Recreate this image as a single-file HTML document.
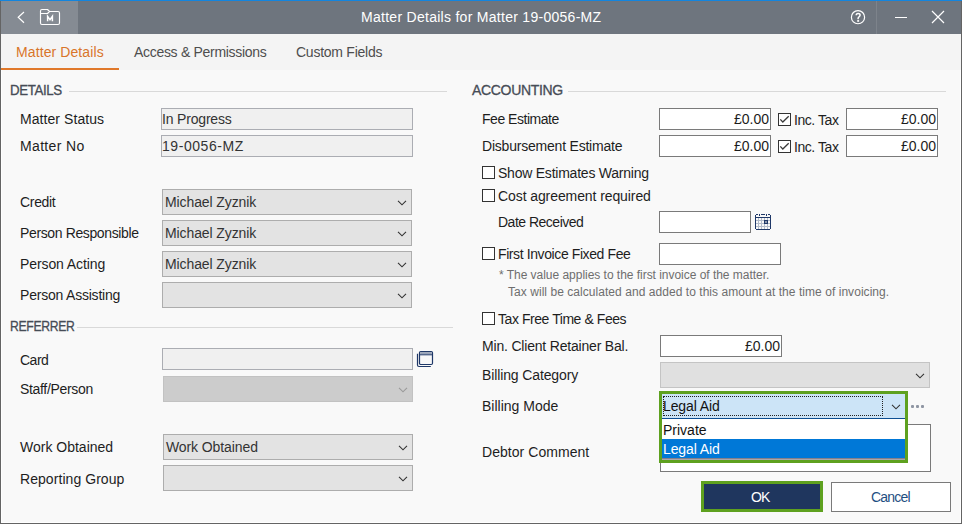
<!DOCTYPE html>
<html><head><meta charset="utf-8"><style>
html,body{margin:0;padding:0;}
body{width:962px;height:524px;position:relative;overflow:hidden;background:#f9f9f9;font-family:"Liberation Sans", sans-serif;}
.a{position:absolute;}
.t{white-space:nowrap;}
</style></head><body>
<div class="a" style="left:0px;top:0px;width:962px;height:1px;background:#1385de;"></div>
<div class="a" style="left:0px;top:1px;width:962px;height:33px;background:#6e757e;"></div>
<div class="a" style="left:1px;top:1px;width:77px;height:33px;background:#858b93;"></div>
<div class="a" style="left:876px;top:1px;width:1px;height:33px;background:#7d838b;"></div>
<svg class="a" style="left:15px;top:9px" width="12" height="16" viewBox="0 0 12 16"><path d="M9 3 L3.2 8.3 L9 13.7" fill="none" stroke="#fff" stroke-width="1.2"/></svg>
<svg class="a" style="left:36px;top:5px" width="28" height="24" viewBox="0 0 28 24"><path d="M4.5 6 Q4.5 4.5 6 4.5 H11.5 L13.5 6.5 H22 Q23.5 6.5 23.5 8 V18 Q23.5 19.5 22 19.5 H6 Q4.5 19.5 4.5 18 Z M4.5 8.5 H11.5 L13.5 6.5" fill="none" stroke="#fff" stroke-width="1.15" stroke-linejoin="round"/><path d="M11.6 16.2 V11.3 L14 14.6 L16.4 11.3 V16.2" fill="none" stroke="#fff" stroke-width="1.5" stroke-linejoin="miter"/></svg>
<div class="a t" style="top:9px;font-size:14px;line-height:16px;color:#ffffff;letter-spacing:0.28px;left:361px;">Matter Details for Matter 19-0056-MZ</div>
<svg class="a" style="left:849px;top:8px" width="18" height="18" viewBox="0 0 18 18"><circle cx="9" cy="9.15" r="6.6" fill="none" stroke="#fff" stroke-width="1.2"/><path d="M7.2 7.3 Q7.2 5.4 9.1 5.4 Q11.1 5.4 11.1 7.1 Q11.1 8.2 10 8.8 Q9.1 9.3 9.1 10.4 V11.3" fill="none" stroke="#fff" stroke-width="1.5"/><rect x="8.2" y="12.1" width="1.9" height="1.7" fill="#fff"/></svg>
<div class="a" style="left:895px;top:17px;width:12px;height:1px;background:#ffffff;"></div>
<svg class="a" style="left:930px;top:9px" width="16" height="16" viewBox="0 0 16 16"><path d="M2 2 L14 14 M14 2 L2 14" stroke="#fff" stroke-width="1.2"/></svg>
<div class="a" style="left:1px;top:34px;width:960px;height:36px;background:#f4f4f4;"></div>
<div class="a t" style="top:44px;font-size:14px;line-height:16px;color:#d9752a;letter-spacing:0.1px;left:16px;">Matter Details</div>
<div class="a t" style="top:44px;font-size:14px;line-height:16px;color:#4e4e4e;letter-spacing:-0.3px;left:134px;">Access &amp; Permissions</div>
<div class="a t" style="top:44px;font-size:14px;line-height:16px;color:#4e4e4e;letter-spacing:-0.25px;left:296px;">Custom Fields</div>
<div class="a" style="left:1px;top:68px;width:118px;height:2px;background:#e0782a;"></div>
<div class="a" style="left:0px;top:1px;width:1px;height:523px;background:#646464;"></div>
<div class="a" style="left:961px;top:1px;width:1px;height:523px;background:#646464;"></div>
<div class="a" style="left:0px;top:523px;width:962px;height:1px;background:#646464;"></div>
<div class="a" style="left:1px;top:522px;width:960px;height:1px;background:#ffffff;"></div>
<div class="a" style="left:1px;top:70px;width:1px;height:453px;background:#ffffff;"></div>
<div class="a" style="left:960px;top:70px;width:1px;height:453px;background:#ffffff;"></div>
<div class="a t" style="top:82px;font-size:14px;line-height:16px;color:#464c56;letter-spacing:-0.4px;left:10px;-webkit-text-stroke:0.3px #464c56;transform:scaleX(0.95);transform-origin:0 0;">DETAILS</div>
<div class="a" style="left:69px;top:91px;width:378px;height:1px;background:#d9d9d9;"></div>
<div class="a t" style="top:111px;font-size:14px;line-height:16px;color:#1e1e1e;letter-spacing:0.07px;left:20px;">Matter Status</div>
<div class="a" style="left:161px;top:108px;width:252px;height:22px;background:#f0f0f0;box-shadow:inset 0 0 0 1px #abadb3;"></div>
<div class="a t" style="top:111px;font-size:14px;line-height:16px;color:#333;letter-spacing:-0.18px;left:162px;">In Progress</div>
<div class="a t" style="top:138px;font-size:14px;line-height:16px;color:#1e1e1e;letter-spacing:0.34px;left:20px;">Matter No</div>
<div class="a" style="left:161px;top:135px;width:252px;height:22px;background:#f0f0f0;box-shadow:inset 0 0 0 1px #abadb3;"></div>
<div class="a t" style="top:138px;font-size:14px;line-height:16px;color:#333;letter-spacing:0.55px;left:162px;">19-0056-MZ</div>
<div class="a t" style="top:194px;font-size:14px;line-height:16px;color:#1e1e1e;letter-spacing:-0.32px;left:20px;">Credit</div>
<div class="a" style="left:162px;top:189px;width:250px;height:26px;background:#e3e3e3;box-shadow:inset 0 0 0 1px #adadad;"></div>
<div class="a t" style="top:194px;font-size:14px;line-height:16px;color:#333;letter-spacing:-0.1px;left:165px;">Michael Zyznik</div>
<svg class="a" style="left:397px;top:200px" width="10" height="6" viewBox="0 0 10 6"><path d="M1 0.8 L5 4.8 L9 0.8" fill="none" stroke="#333" stroke-width="1.1"/></svg>
<div class="a t" style="top:225px;font-size:14px;line-height:16px;color:#1e1e1e;letter-spacing:-0.37px;left:20px;">Person Responsible</div>
<div class="a" style="left:162px;top:220px;width:250px;height:26px;background:#e3e3e3;box-shadow:inset 0 0 0 1px #adadad;"></div>
<div class="a t" style="top:225px;font-size:14px;line-height:16px;color:#333;letter-spacing:-0.1px;left:165px;">Michael Zyznik</div>
<svg class="a" style="left:397px;top:231px" width="10" height="6" viewBox="0 0 10 6"><path d="M1 0.8 L5 4.8 L9 0.8" fill="none" stroke="#333" stroke-width="1.1"/></svg>
<div class="a t" style="top:256px;font-size:14px;line-height:16px;color:#1e1e1e;letter-spacing:-0.1px;left:20px;">Person Acting</div>
<div class="a" style="left:162px;top:251px;width:250px;height:26px;background:#e3e3e3;box-shadow:inset 0 0 0 1px #adadad;"></div>
<div class="a t" style="top:256px;font-size:14px;line-height:16px;color:#333;letter-spacing:-0.1px;left:165px;">Michael Zyznik</div>
<svg class="a" style="left:397px;top:262px" width="10" height="6" viewBox="0 0 10 6"><path d="M1 0.8 L5 4.8 L9 0.8" fill="none" stroke="#333" stroke-width="1.1"/></svg>
<div class="a t" style="top:287px;font-size:14px;line-height:16px;color:#1e1e1e;letter-spacing:-0.21px;left:20px;">Person Assisting</div>
<div class="a" style="left:162px;top:282px;width:250px;height:26px;background:#e3e3e3;box-shadow:inset 0 0 0 1px #adadad;"></div>
<svg class="a" style="left:397px;top:293px" width="10" height="6" viewBox="0 0 10 6"><path d="M1 0.8 L5 4.8 L9 0.8" fill="none" stroke="#333" stroke-width="1.1"/></svg>
<div class="a t" style="top:318px;font-size:14px;line-height:16px;color:#464c56;letter-spacing:-0.35px;left:10px;-webkit-text-stroke:0.3px #464c56;transform:scaleX(0.87);transform-origin:0 0;">REFERRER</div>
<div class="a" style="left:77px;top:327px;width:376px;height:1px;background:#d9d9d9;"></div>
<div class="a t" style="top:352px;font-size:14px;line-height:16px;color:#1e1e1e;letter-spacing:-0.5px;left:20px;">Card</div>
<div class="a" style="left:162px;top:348px;width:251px;height:22px;background:#f0f0f0;box-shadow:inset 0 0 0 1px #abadb3;"></div>
<svg class="a" style="left:416px;top:350px" width="18" height="18" viewBox="0 0 18 18"><rect x="3.5" y="1.5" width="13" height="13" rx="1.2" fill="#f7f7f8" stroke="#1f3868" stroke-width="1.2"/><rect x="4.1" y="2.1" width="11.8" height="2.2" fill="#96a1b6"/><line x1="3.5" y1="4.8" x2="16.5" y2="4.8" stroke="#1f3868" stroke-width="1"/><path d="M1.5 3.8 V15 Q1.5 16.5 3 16.5 H14.8" fill="none" stroke="#1f3868" stroke-width="1.2"/></svg>
<div class="a t" style="top:381px;font-size:14px;line-height:16px;color:#1e1e1e;letter-spacing:-0.32px;left:20px;">Staff/Person</div>
<div class="a" style="left:163px;top:376px;width:250px;height:26px;background:#cccccc;box-shadow:inset 0 0 0 1px #c2c2c2;"></div>
<svg class="a" style="left:398px;top:387px" width="10" height="6" viewBox="0 0 10 6"><path d="M1 0.8 L5 4.8 L9 0.8" fill="none" stroke="#9a9a9a" stroke-width="1.1"/></svg>
<div class="a t" style="top:439px;font-size:14px;line-height:16px;color:#1e1e1e;left:20px;">Work Obtained</div>
<div class="a" style="left:163px;top:434px;width:250px;height:26px;background:#e3e3e3;box-shadow:inset 0 0 0 1px #adadad;"></div>
<div class="a t" style="top:439px;font-size:14px;line-height:16px;color:#333;letter-spacing:-0.1px;left:166px;">Work Obtained</div>
<svg class="a" style="left:398px;top:445px" width="10" height="6" viewBox="0 0 10 6"><path d="M1 0.8 L5 4.8 L9 0.8" fill="none" stroke="#333" stroke-width="1.1"/></svg>
<div class="a t" style="top:471px;font-size:14px;line-height:16px;color:#1e1e1e;letter-spacing:0.06px;left:20px;">Reporting Group</div>
<div class="a" style="left:163px;top:465px;width:250px;height:26px;background:#e3e3e3;box-shadow:inset 0 0 0 1px #adadad;"></div>
<svg class="a" style="left:398px;top:476px" width="10" height="6" viewBox="0 0 10 6"><path d="M1 0.8 L5 4.8 L9 0.8" fill="none" stroke="#333" stroke-width="1.1"/></svg>
<div class="a t" style="top:82px;font-size:14px;line-height:16px;color:#464c56;letter-spacing:-0.32px;left:472px;-webkit-text-stroke:0.3px #464c56;">ACCOUNTING</div>
<div class="a" style="left:568px;top:91px;width:378px;height:1px;background:#d9d9d9;"></div>
<div class="a t" style="top:111px;font-size:14px;line-height:16px;color:#1e1e1e;letter-spacing:-0.48px;left:482px;">Fee Estimate</div>
<div class="a t" style="top:138px;font-size:14px;line-height:16px;color:#1e1e1e;letter-spacing:-0.21px;left:482px;">Disbursement Estimate</div>
<div class="a" style="left:659px;top:108px;width:112px;height:22px;background:#ffffff;box-shadow:inset 0 0 0 1px #7a7a7a;"></div>
<div class="a t" style="top:111px;font-size:14px;line-height:16px;color:#1c1c1c;right:193px;">£0.00</div>
<div class="a" style="left:659px;top:135px;width:112px;height:22px;background:#ffffff;box-shadow:inset 0 0 0 1px #7a7a7a;"></div>
<div class="a t" style="top:138px;font-size:14px;line-height:16px;color:#1c1c1c;right:193px;">£0.00</div>
<div class="a" style="left:846px;top:108px;width:92px;height:22px;background:#ffffff;box-shadow:inset 0 0 0 1px #7a7a7a;"></div>
<div class="a t" style="top:111px;font-size:14px;line-height:16px;color:#1c1c1c;right:26px;">£0.00</div>
<div class="a" style="left:846px;top:135px;width:92px;height:22px;background:#ffffff;box-shadow:inset 0 0 0 1px #7a7a7a;"></div>
<div class="a t" style="top:138px;font-size:14px;line-height:16px;color:#1c1c1c;right:26px;">£0.00</div>
<div class="a" style="left:778px;top:113px;width:13px;height:13px;background:#ffffff;box-shadow:inset 0 0 0 1px #333333;"></div>
<svg class="a" style="left:778px;top:113px" width="13" height="13" viewBox="0 0 13 13"><path d="M2.3 6.4 L4.8 9 L10.7 3.2" fill="none" stroke="#3a3a3a" stroke-width="1.3"/></svg>
<div class="a t" style="top:112px;font-size:14px;line-height:16px;color:#1e1e1e;letter-spacing:-0.44px;left:794px;">Inc. Tax</div>
<div class="a" style="left:778px;top:140px;width:13px;height:13px;background:#ffffff;box-shadow:inset 0 0 0 1px #333333;"></div>
<svg class="a" style="left:778px;top:140px" width="13" height="13" viewBox="0 0 13 13"><path d="M2.3 6.4 L4.8 9 L10.7 3.2" fill="none" stroke="#3a3a3a" stroke-width="1.3"/></svg>
<div class="a t" style="top:139px;font-size:14px;line-height:16px;color:#1e1e1e;letter-spacing:-0.44px;left:794px;">Inc. Tax</div>
<div class="a" style="left:482px;top:166px;width:13px;height:13px;background:#ffffff;box-shadow:inset 0 0 0 1px #333333;"></div>
<div class="a t" style="top:165px;font-size:14px;line-height:16px;color:#1e1e1e;letter-spacing:-0.23px;left:498px;">Show Estimates Warning</div>
<div class="a" style="left:482px;top:189px;width:13px;height:13px;background:#ffffff;box-shadow:inset 0 0 0 1px #333333;"></div>
<div class="a t" style="top:188px;font-size:14px;line-height:16px;color:#1e1e1e;letter-spacing:-0.09px;left:498px;">Cost agreement required</div>
<div class="a t" style="top:214px;font-size:14px;line-height:16px;color:#1e1e1e;letter-spacing:-0.5px;left:498px;">Date Received</div>
<div class="a" style="left:659px;top:211px;width:92px;height:22px;background:#ffffff;box-shadow:inset 0 0 0 1px #7a7a7a;"></div>
<svg class="a" style="left:755px;top:214px" width="16" height="16" viewBox="0 0 16 16" shape-rendering="crispEdges"><rect x="3" y="4" width="1" height="11" fill="#b3bccb"/><rect x="6" y="4" width="1" height="11" fill="#b3bccb"/><rect x="9" y="4" width="1" height="11" fill="#b3bccb"/><rect x="12" y="4" width="1" height="11" fill="#b3bccb"/><rect x="1" y="6" width="14" height="1" fill="#b3bccb"/><rect x="1" y="9" width="14" height="1" fill="#b3bccb"/><rect x="1" y="12" width="14" height="1" fill="#b3bccb"/><rect x="0" y="1" width="1" height="14" fill="#1f3868"/><rect x="15" y="1" width="1" height="14" fill="#1f3868"/><rect x="1" y="15" width="14" height="1" fill="#1f3868"/><rect x="1" y="0" width="2" height="1" fill="#1f3868"/><rect x="6" y="0" width="4" height="1" fill="#1f3868"/><rect x="13" y="0" width="2" height="1" fill="#1f3868"/><rect x="4" y="0" width="1" height="2" fill="#1f3868"/><rect x="11" y="0" width="1" height="2" fill="#1f3868"/><rect x="1" y="3" width="14" height="1" fill="#1f3868"/><rect x="9" y="6" width="4" height="4" fill="#1f3868"/><rect x="10" y="7" width="2" height="2" fill="#8d98ad"/></svg>
<div class="a" style="left:482px;top:247px;width:13px;height:13px;background:#ffffff;box-shadow:inset 0 0 0 1px #333333;"></div>
<div class="a t" style="top:246px;font-size:14px;line-height:16px;color:#1e1e1e;letter-spacing:-0.4px;left:498px;">First Invoice Fixed Fee</div>
<div class="a" style="left:659px;top:243px;width:122px;height:22px;background:#ffffff;box-shadow:inset 0 0 0 1px #7a7a7a;"></div>
<div class="a t" style="top:268px;font-size:12px;line-height:14px;color:#6e6e6e;letter-spacing:-0.03px;left:499px;">* The value applies to the first invoice of the matter.</div>
<div class="a t" style="top:285px;font-size:12px;line-height:14px;color:#6e6e6e;letter-spacing:0.05px;left:508px;">Tax will be calculated and added to this amount at the time of invoicing.</div>
<div class="a" style="left:482px;top:312px;width:13px;height:13px;background:#ffffff;box-shadow:inset 0 0 0 1px #333333;"></div>
<div class="a t" style="top:311px;font-size:14px;line-height:16px;color:#1e1e1e;letter-spacing:-0.44px;left:498px;">Tax Free Time &amp; Fees</div>
<div class="a t" style="top:338px;font-size:14px;line-height:16px;color:#1e1e1e;letter-spacing:-0.19px;left:482px;">Min. Client Retainer Bal.</div>
<div class="a" style="left:660px;top:335px;width:122px;height:22px;background:#ffffff;box-shadow:inset 0 0 0 1px #7a7a7a;"></div>
<div class="a t" style="top:338px;font-size:14px;line-height:16px;color:#1c1c1c;right:182px;">£0.00</div>
<div class="a t" style="top:367px;font-size:14px;line-height:16px;color:#1e1e1e;letter-spacing:-0.12px;left:482px;">Billing Category</div>
<div class="a" style="left:660px;top:362px;width:270px;height:26px;background:#e0e0e0;box-shadow:inset 0 0 0 1px #c4c4c4;"></div>
<svg class="a" style="left:915px;top:373px" width="10" height="6" viewBox="0 0 10 6"><path d="M1 0.8 L5 4.8 L9 0.8" fill="none" stroke="#333" stroke-width="1.1"/></svg>
<div class="a t" style="top:398px;font-size:14px;line-height:16px;color:#1e1e1e;left:482px;">Billing Mode</div>
<div class="a t" style="top:444px;font-size:14px;line-height:16px;color:#1e1e1e;letter-spacing:0.05px;left:482px;">Debtor Comment</div>
<div class="a" style="left:660px;top:424px;width:271px;height:48px;background:#ffffff;box-shadow:inset 0 0 0 1px #7a7a7a;"></div>
<div class="a" style="left:659px;top:391px;width:249px;height:72px;background:#5ea11f;"></div>
<div class="a" style="left:662px;top:394px;width:243px;height:24px;background:#cce4f7;"></div>
<div class="a" style="left:663px;top:396px;width:220px;height:20px;box-sizing:border-box;border:1px dotted #222"></div>
<div class="a t" style="top:398px;font-size:14px;line-height:16px;color:#111;letter-spacing:-0.1px;left:663px;">Legal Aid</div>
<svg class="a" style="left:891px;top:404px" width="10" height="6" viewBox="0 0 10 6"><path d="M1 0.8 L5 4.8 L9 0.8" fill="none" stroke="#333" stroke-width="1.1"/></svg>
<div class="a" style="left:662px;top:418px;width:243px;height:1px;background:#0d4f92;"></div>
<div class="a" style="left:662px;top:419px;width:243px;height:20px;background:#ffffff;"></div>
<div class="a t" style="top:422px;font-size:14px;line-height:16px;color:#111;left:663px;">Private</div>
<div class="a" style="left:662px;top:439px;width:243px;height:19px;background:#0078d7;"></div>
<div class="a t" style="top:441px;font-size:14px;line-height:16px;color:#ffffff;letter-spacing:-0.1px;left:663px;">Legal Aid</div>
<div class="a" style="left:662px;top:458px;width:243px;height:1px;background:#85808a;"></div>
<div class="a" style="left:662px;top:459px;width:243px;height:1px;background:#aaa6ac;"></div>
<div class="a" style="left:911px;top:405px;width:3px;height:3px;background:#8f96a3;border-radius:1px;"></div>
<div class="a" style="left:916px;top:405px;width:3px;height:3px;background:#8f96a3;border-radius:1px;"></div>
<div class="a" style="left:921px;top:405px;width:3px;height:3px;background:#8f96a3;border-radius:1px;"></div>
<div class="a" style="left:701px;top:481px;width:122px;height:31px;background:#5ea11f;"></div>
<div class="a" style="left:704px;top:484px;width:116px;height:25px;background:#1f365e;"></div>
<div class="a t" style="top:489px;font-size:14px;line-height:16px;color:#ffffff;letter-spacing:-1px;left:751px;">OK</div>
<div class="a" style="left:831px;top:482px;width:120px;height:30px;background:#ffffff;box-shadow:inset 0 0 0 1px #7a7a7a;"></div>
<div class="a t" style="top:489px;font-size:14px;line-height:16px;color:#1f4f82;letter-spacing:-0.8px;left:871px;">Cancel</div>
</body></html>
